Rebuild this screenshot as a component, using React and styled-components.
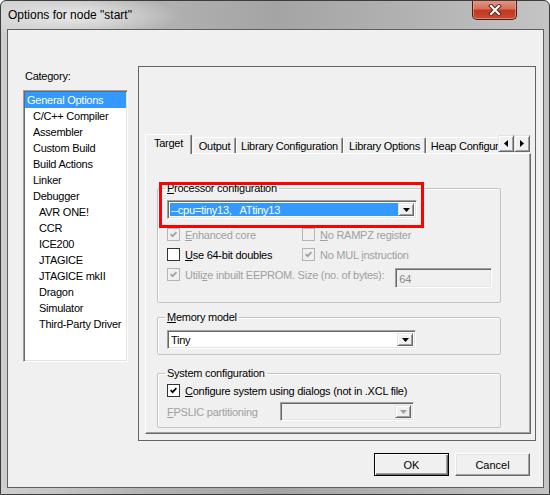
import React from 'react';
import styled, { createGlobalStyle } from 'styled-components';

const GlobalStyle = createGlobalStyle`
  html, body {
    margin: 0;
    padding: 0;
    background: #ffffff;
  }
  body {
    font-family: "Liberation Sans", Arial, sans-serif;
    font-size: 11px;
    letter-spacing: -0.25px;
    color: #000;
  }
  * {
    box-sizing: border-box;
  }
`;

const Window = styled.div`
  width: 550px;
  height: 495px;
  display: flex;
  flex-direction: column;
  padding: 0 5px 6px 6px;
  border: 1px solid #3c3c3c;
  border-radius: 6px 6px 0 0;
  overflow: hidden;
  background:
    radial-gradient(ellipse 110px 22px at 70px 15px, rgba(235, 235, 235, 0.95), rgba(235, 235, 235, 0) 100%),
    linear-gradient(to right, #cfcfcf 0%, #b4b4b4 25%, #a4a4a4 50%, #b2b2b2 75%, #c4c4c4 100%);
`;

const TitleBar = styled.div`
  height: 28px;
  flex: none;
  display: flex;
  align-items: flex-start;
  justify-content: space-between;
`;

const TitleText = styled.div`
  margin: 7px 0 0 1px;
  font-size: 12px;
  letter-spacing: 0;
  line-height: 14px;
  color: #000;
`;

const CloseButton = styled.div`
  width: 45px;
  height: 20px;
  margin: -1px 27px 0 0;
  display: flex;
  align-items: center;
  justify-content: center;
  border: 1px solid #4a1c14;
  border-top: none;
  border-radius: 0 0 5px 5px;
  background: linear-gradient(to bottom, #e39a8a 0%, #d6705c 45%, #c13a22 55%, #cc4a32 100%);
  box-shadow: inset 0 0 0 1px rgba(255, 190, 175, 0.5);
`;

const Client = styled.div`
  flex: 1;
  display: flex;
  flex-direction: column;
  border: 1px solid #5f5f5f;
  background: #f0f0f0;
`;

const Main = styled.div`
  display: flex;
  align-items: flex-start;
`;

const LeftColumn = styled.div`
  width: 105px;
  margin-left: 15px;
  padding-top: 40px;
`;

const CategoryLabel = styled.div`
  margin: 0 0 7px 2px;
  line-height: 13px;
`;

const ListBox = styled.div`
  height: 272px;
  padding: 1px 1px 0 1px;
  background: #fff;
  border: 1px solid;
  border-color: #a0a0a0 #ffffff #ffffff #a0a0a0;
  box-shadow: inset 1px 1px 0 #696969, inset -1px -1px 0 #e3e3e3;
  display: flex;
  flex-direction: column;
`;

const ListItem = styled.div`
  height: 16px;
  line-height: 16px;
  padding-left: ${p => 2 + p.$level * 6}px;
  white-space: nowrap;
  background: ${p => (p.$selected ? '#3399ff' : 'transparent')};
  color: ${p => (p.$selected ? '#fff' : '#000')};
`;

const RightFrame = styled.div`
  width: 398px;
  height: 375px;
  margin: 36px 0 0 10px;
  padding: 65px 4px 6px 6px;
  border: 1px solid #646464;
  display: flex;
  flex-direction: column;
`;

const TabStrip = styled.div`
  height: 21px;
  flex: none;
  display: flex;
  align-items: flex-end;
`;

const TabViewport = styled.div`
  flex: 1;
  min-width: 0;
  display: flex;
  align-items: flex-end;
  height: 100%;
  overflow-x: clip;
  overflow-y: visible;
`;

const Tab = styled.div`
  flex: none;
  width: ${p => p.$width}px;
  height: ${p => (p.$active ? 20 : 16)}px;
  margin-right: ${p => (p.$active ? 1 : 0)}px;
  margin-bottom: ${p => (p.$active ? -1 : 0)}px;
  padding-top: ${p => (p.$active ? 2 : 2)}px;
  line-height: 13px;
  text-align: center;
  white-space: nowrap;
  background: #f0f0f0;
  border: 1px solid;
  border-bottom: none;
  border-color: #ffffff #696969 transparent #ffffff;
  border-radius: 2px 2px 0 0;
  box-shadow: inset -1px 0 0 #a0a0a0;
  ${p => p.$active && 'position: relative; z-index: 1;'}
`;

const ScrollArrows = styled.div`
  display: flex;
  flex: none;
  margin: 0 1px 1px 0;
`;

const ArrowButton = styled.div`
  width: 16px;
  height: 17px;
  display: flex;
  align-items: center;
  justify-content: center;
  background: #f0f0f0;
  border: 1px solid;
  border-color: #e3e3e3 #696969 #696969 #e3e3e3;
  box-shadow: inset 1px 1px 0 #ffffff, inset -1px -1px 0 #a0a0a0;
`;

const TabBody = styled.div`
  flex: 1;
  padding: 28px 0 0 11px;
  border: 1px solid;
  border-color: #ffffff #696969 #696969 #ffffff;
  box-shadow: inset -1px -1px 0 #a0a0a0;
`;

const Annotated = styled.div`
  position: relative;
  width: 344px;
`;

const Group = styled.fieldset`
  width: 344px;
  margin: ${p => p.$gap}px 0 0 0;
  padding: 0 0 ${p => p.$bottom}px 9px;
  border: 1px solid #c4c4c4;
  border-radius: 2px;
  box-shadow: inset 1px 1px 0 #ffffff;
  min-width: 0;
`;

const Legend = styled.legend`
  margin-left: -2px;
  padding: 0 2px;
  line-height: 13px;
`;

const RedMark = styled.div`
  position: absolute;
  left: 2px;
  top: 0;
  width: 265px;
  height: 46px;
  border: 3px solid #ff0000;
  pointer-events: none;
`;

const Combo = styled.div`
  width: ${p => p.$width}px;
  height: 19px;
  margin-top: ${p => p.$top || 0}px;
  display: flex;
  padding: 2px;
  background: ${p => (p.$disabled ? '#f0f0f0' : '#ffffff')};
  border: 1px solid;
  border-color: #a0a0a0 #ffffff #ffffff #a0a0a0;
  box-shadow: inset 1px 1px 0 #696969, inset -1px -1px 0 #e3e3e3;
`;

const ComboValue = styled.div`
  flex: 1;
  line-height: 15px;
  padding-left: 1px;
  white-space: pre;
  background: ${p => (p.$selected ? '#3399ff' : 'transparent')};
  color: ${p => (p.$selected ? '#fff' : '#000')};
`;

const DropButton = styled.div`
  width: 16px;
  flex: none;
  display: flex;
  align-items: center;
  justify-content: center;
  background: #f0f0f0;
  border: 1px solid;
  border-color: #e3e3e3 #696969 #696969 #e3e3e3;
  box-shadow: inset 1px 1px 0 #ffffff, inset -1px -1px 0 #a0a0a0;
`;

const Row = styled.div`
  display: flex;
  align-items: ${p => (p.$top ? 'flex-start' : 'center')};
  margin-top: ${p => p.$gap}px;
  height: ${p => p.$height || 15}px;
`;

const CheckItem = styled.div`
  display: flex;
  align-items: center;
  width: ${p => (p.$width ? `${p.$width}px` : 'auto')};
  height: 15px;
  color: ${p => (p.$disabled ? '#a0a0a0' : '#000')};
  white-space: nowrap;
`;

const Box = styled.span`
  width: 13px;
  height: 13px;
  flex: none;
  margin-right: 5px;
  display: flex;
  align-items: center;
  justify-content: center;
  background: ${p => (p.$disabled ? '#f0f0f0' : '#ffffff')};
  border: 1px solid ${p => (p.$disabled ? '#b4b4b4' : '#333333')};
`;

const TextField = styled.div`
  width: 97px;
  height: 20px;
  margin: 1px 0 0 11px;
  padding: 3px 0 0 3px;
  color: #8a8a8a;
  line-height: 14px;
  background: #f0f0f0;
  border: 1px solid;
  border-color: #a0a0a0 #ffffff #ffffff #a0a0a0;
  box-shadow: inset 1px 1px 0 #696969, inset -1px -1px 0 #e3e3e3;
`;

const FieldLabel = styled.div`
  width: 113px;
  flex: none;
  color: #a0a0a0;
`;

const ButtonRow = styled.div`
  display: flex;
  justify-content: flex-end;
  gap: 6px;
  margin-top: 12px;
  padding-right: 13px;
`;

const Button = styled.div`
  width: 75px;
  height: 23px;
  display: flex;
  align-items: center;
  justify-content: center;
  letter-spacing: 0;
  font-size: 11px;
  background: #f0f0f0;
  border: 1px solid;
  border-color: ${p => (p.$default ? '#000000' : '#ffffff #696969 #696969 #ffffff')};
  box-shadow: ${p =>
    p.$default
      ? 'inset 1px 1px 0 #ffffff, inset -1px -1px 0 #696969, inset -2px -2px 0 #a0a0a0'
      : 'inset -1px -1px 0 #a0a0a0, inset 1px 1px 0 #e3e3e3'};
`;

const Check = ({ color }) => (
  <svg width="7" height="7" viewBox="0 0 7 7">
    <polyline points="0.6,3.2 2.6,5.2 6.4,1.2" fill="none" stroke={color} strokeWidth="1.7" />
  </svg>
);

const DownArrow = ({ color = '#000' }) => (
  <svg width="7" height="4" viewBox="0 0 7 4">
    <polygon points="0,0 7,0 3.5,4" fill={color} />
  </svg>
);

const SideArrow = ({ dir }) => (
  <svg width="4" height="7" viewBox="0 0 4 7">
    <polygon points={dir === 'left' ? '4,0 4,7 0,3.5' : '0,0 0,7 4,3.5'} fill="#000" />
  </svg>
);

const CheckBox = ({ checked, disabled, width, children }) => (
  <CheckItem $disabled={disabled} $width={width}>
    <Box $disabled={disabled}>{checked && <Check color={disabled ? '#a0a0a0' : '#000'} />}</Box>
    <span>{children}</span>
  </CheckItem>
);

const categories = [
  ['General Options', 0],
  ['C/C++ Compiler', 1],
  ['Assembler', 1],
  ['Custom Build', 1],
  ['Build Actions', 1],
  ['Linker', 1],
  ['Debugger', 1],
  ['AVR ONE!', 2],
  ['CCR', 2],
  ['ICE200', 2],
  ['JTAGICE', 2],
  ['JTAGICE mkII', 2],
  ['Dragon', 2],
  ['Simulator', 2],
  ['Third-Party Driver', 2],
];

const tabs = [
  ['Target', 47],
  ['Output', 43],
  ['Library Configuration', 107],
  ['Library Options', 83],
  ['Heap Configuration', 100],
];

const App = () => (
  <>
    <GlobalStyle />
    <Window>
      <TitleBar>
        <TitleText>Options for node "start"</TitleText>
        <CloseButton>
          <svg width="14" height="12" viewBox="0 0 14 12">
            <path d="M3 2 L11 10 M11 2 L3 10" stroke="#5a2a22" strokeWidth="4" strokeLinecap="square" />
            <path d="M3 2 L11 10 M11 2 L3 10" stroke="#ffffff" strokeWidth="2" strokeLinecap="square" />
          </svg>
        </CloseButton>
      </TitleBar>
      <Client>
        <Main>
          <LeftColumn>
            <CategoryLabel>Category:</CategoryLabel>
            <ListBox>
              {categories.map(([name, level], i) => (
                <ListItem key={name} $level={level} $selected={i === 0}>
                  {name}
                </ListItem>
              ))}
            </ListBox>
          </LeftColumn>
          <RightFrame>
            <TabStrip>
              <TabViewport>
                {tabs.map(([name, width], i) => (
                  <Tab key={name} $width={width} $active={i === 0}>
                    {name}
                  </Tab>
                ))}
              </TabViewport>
              <ScrollArrows>
                <ArrowButton>
                  <SideArrow dir="left" />
                </ArrowButton>
                <ArrowButton>
                  <SideArrow dir="right" />
                </ArrowButton>
              </ScrollArrows>
            </TabStrip>
            <TabBody>
              <Annotated>
                <Group $gap={0} $bottom={14}>
                  <Legend>
                    <u>P</u>rocessor configuration
                  </Legend>
                  <Combo $width={250} $top={5}>
                    <ComboValue $selected>{'--cpu=tiny13,   ATtiny13'}</ComboValue>
                    <DropButton>
                      <DownArrow />
                    </DropButton>
                  </Combo>
                  <Row $gap={8}>
                    <CheckBox checked disabled width={135}>
                      <u>E</u>nhanced core
                    </CheckBox>
                    <CheckBox disabled>
                      <u>N</u>o RAMPZ register
                    </CheckBox>
                  </Row>
                  <Row $gap={5}>
                    <CheckBox width={135}>
                      <u>U</u>se 64-bit doubles
                    </CheckBox>
                    <CheckBox checked disabled>
                      No MUL <u>i</u>nstruction
                    </CheckBox>
                  </Row>
                  <Row $gap={5} $top $height={21}>
                    <CheckBox checked disabled>
                      Utili<u>z</u>e inbuilt EEPROM. Size (no. of bytes):
                    </CheckBox>
                    <TextField>64</TextField>
                  </Row>
                </Group>
                <RedMark />
              </Annotated>
              <Group $gap={8} $bottom={5}>
                <Legend>
                  <u>M</u>emory model
                </Legend>
                <Combo $width={249} $top={6}>
                  <ComboValue>Tiny</ComboValue>
                  <DropButton>
                    <DownArrow />
                  </DropButton>
                </Combo>
              </Group>
              <Group $gap={12} $bottom={5}>
                <Legend>System configuration</Legend>
                <Row $gap={3}>
                  <CheckBox checked>
                    <u>C</u>onfigure system using dialogs (not in .XCL file)
                  </CheckBox>
                </Row>
                <Row $gap={3} $height={21}>
                  <FieldLabel>
                    <u>F</u>PSLIC partitioning
                  </FieldLabel>
                  <Combo $width={134} $disabled>
                    <ComboValue />
                    <DropButton>
                      <DownArrow color="#a0a0a0" />
                    </DropButton>
                  </Combo>
                </Row>
              </Group>
            </TabBody>
          </RightFrame>
        </Main>
        <ButtonRow>
          <Button $default>OK</Button>
          <Button>Cancel</Button>
        </ButtonRow>
      </Client>
    </Window>
  </>
);

export default App;
